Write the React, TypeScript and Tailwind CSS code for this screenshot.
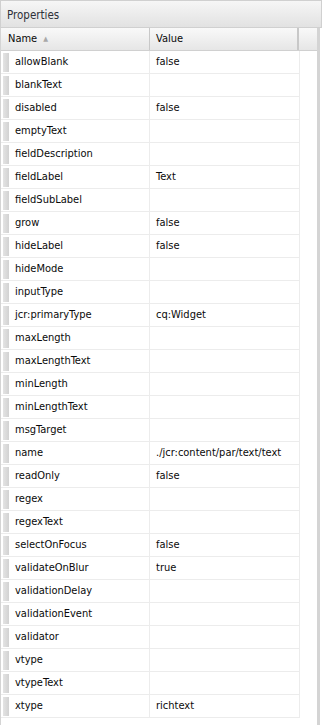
const rows: [string, string][] = [
  ['allowBlank', 'false'],
  ['blankText', ''],
  ['disabled', 'false'],
  ['emptyText', ''],
  ['fieldDescription', ''],
  ['fieldLabel', 'Text'],
  ['fieldSubLabel', ''],
  ['grow', 'false'],
  ['hideLabel', 'false'],
  ['hideMode', ''],
  ['inputType', ''],
  ['jcr:primaryType', 'cq:Widget'],
  ['maxLength', ''],
  ['maxLengthText', ''],
  ['minLength', ''],
  ['minLengthText', ''],
  ['msgTarget', ''],
  ['name', './jcr:content/par/text/text'],
  ['readOnly', 'false'],
  ['regex', ''],
  ['regexText', ''],
  ['selectOnFocus', 'false'],
  ['validateOnBlur', 'true'],
  ['validationDelay', ''],
  ['validationEvent', ''],
  ['validator', ''],
  ['vtype', ''],
  ['vtypeText', ''],
  ['xtype', 'richtext'],
];

export default function App() {
  return (
    <div
      className="w-[322px] h-[725px] bg-white flex flex-col overflow-hidden text-[11px] text-[#0a0a0a]"
      style={{ fontFamily: '"DejaVu Sans Condensed", "Liberation Sans", Arial, sans-serif', fontStretch: 'condensed' }}
    >
      <div className="h-[28px] shrink-0 flex items-center pl-[6px] pt-[3px] bg-gradient-to-b from-[#f6f6f6] to-[#e2e2e2] border border-[#d0d0d0] text-[11.5px] text-[#2e3038]">
        Properties
      </div>
      <div className="flex-1 flex flex-col border-l border-r-[3px] border-[#d4d4d4] w-[320px]">
        <div className="h-[23px] shrink-0 flex bg-gradient-to-b from-[#f9f9f9] to-[#e6e6e6] border-b border-[#d0d0d0]">
          <div className="w-[149px] flex items-center pl-[7px] border-r border-[#c8c8c8]">
            Name
            <span className="ml-[6px] text-[7px] text-[#a8a8a8]">▲</span>
          </div>
          <div className="w-[149px] flex items-center pl-[6px] border-r-2 border-[#c8c8c8]">Value</div>
          <div className="flex-1" />
        </div>
        <div className="flex flex-col">
          {rows.map(([name, value]) => (
            <div key={name} className="h-[23px] flex w-[299px] border-b border-[#ececec]">
              <div className="w-[149px] flex items-center border-r border-[#ececec]">
                <div className="w-[6px] h-[19px] ml-[2px] bg-gradient-to-r from-[#e4e4e4] to-[#d2d2d2]" />
                <span className="pl-[6px]">{name}</span>
              </div>
              <div className="w-[150px] flex items-center pl-[6px] border-r border-[#ececec]">{value}</div>
            </div>
          ))}
        </div>
      </div>
    </div>
  );
}
